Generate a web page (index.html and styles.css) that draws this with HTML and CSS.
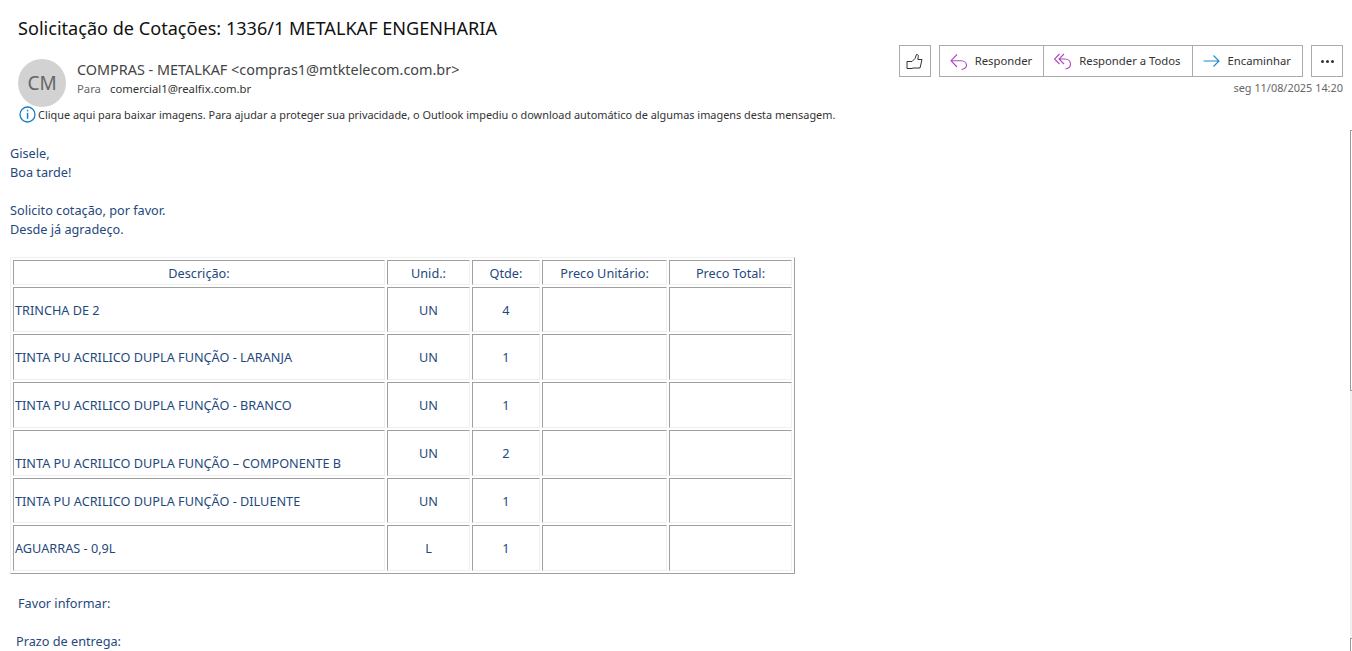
FILE: index.html
```html
<!DOCTYPE html>
<html lang="pt-BR">
<head>
<meta charset="utf-8">
<title>Solicitação de Cotações</title>
<link rel="stylesheet" href="styles.css">
</head>
<body>
<header class="header">
  <h1 class="subject">Solicitação de Cotações: 1336/1 METALKAF ENGENHARIA</h1>
  <div class="meta">
    <div class="avatar">CM</div>
    <div class="people">
      <div class="from">COMPRAS - METALKAF &lt;compras1@mtktelecom.com.br&gt;</div>
      <div class="to"><span class="to-label">Para</span><span>comercial1@realfix.com.br</span></div>
    </div>
    <div class="side">
      <div class="actions">
        <button class="btn btn-icon" aria-label="Curtir">
          <svg width="18" height="18" viewBox="0 0 18 18" fill="none" stroke="#333" stroke-width="1"><path d="M1 8.500h5l3-3 1.500-4c1.300-.2 2 .7 1.800 2l-.5 3h4.200l-2 8.500H7l-1 .5H1z"/></svg>
        </button>
        <div class="group">
          <button class="btn btn-narrow">
            <svg width="18" height="18" viewBox="0 0 18 18" fill="none" stroke="#b146c2" stroke-width="1.100"><path d="M7 2.500 1 8.700l6 6.300M1 8.700h10c3.500 0 5.500 2.300 5.500 4.600s-2 3.700-5 4.200"/></svg>
            Responder
          </button>
          <button class="btn btn-narrow">
            <svg width="18" height="18" viewBox="0 0 18 18" fill="none" stroke="#b146c2" stroke-width="1.100"><path d="M5.500 2 .5 7l5 5M10 2 5 7l5 5M5 7h6c3.500 0 5.500 2.500 5.500 5.300s-2 4.200-5 4.700"/></svg>
            Responder a Todos
          </button>
          <button class="btn btn-wide-gap">
            <svg width="17" height="18" viewBox="0 0 17 18" fill="none" stroke="#1e88d2" stroke-width="1.100"><path d="M.5 9h15.500M10.500 3.500 16 9l-5.500 5.500"/></svg>
            Encaminhar
          </button>
        </div>
        <button class="btn btn-icon btn-more" aria-label="Mais ações"><i></i><i></i><i></i></button>
      </div>
      <div class="date">seg 11/08/2025 14:20</div>
    </div>
  </div>
  <div class="infobar">
    <svg width="17" height="17" viewBox="0 0 17 17"><circle cx="8.500" cy="8.500" r="7.500" fill="#fff" stroke="#1b80c8" stroke-width="1.300"/><rect x="7.800" y="3.800" width="1.500" height="1.600" fill="#1b80c8"/><rect x="7.800" y="6.800" width="1.500" height="6" fill="#1b80c8"/></svg>
    <span>Clique aqui para baixar imagens. Para ajudar a proteger sua privacidade, o Outlook impediu o download automático de algumas imagens desta mensagem.</span>
  </div>
</header>
<div class="edge" aria-hidden="true"></div>
<div class="edge-track" aria-hidden="true"></div>
<div class="edge-low" aria-hidden="true"></div>
<main class="message">
  <p>Gisele,</p>
  <p>Boa tarde!</p>
  <p>&nbsp;</p>
  <p>Solicito cotação, por favor.</p>
  <p>Desde já agradeço.</p>
  <table class="quote">
    <colgroup>
      <col class="c1"><col class="c2"><col class="c3"><col class="c4"><col class="c5">
    </colgroup>
    <thead>
      <tr class="r-head"><th>Descrição:</th><th>Unid.:</th><th>Qtde:</th><th>Preco Unitário:</th><th>Preco Total:</th></tr>
    </thead>
    <tbody>
      <tr class="r-b"><td class="desc">TRINCHA DE 2</td><td>UN</td><td>4</td><td></td><td></td></tr>
      <tr class="r-a"><td class="desc">TINTA PU ACRILICO DUPLA FUNÇÃO - LARANJA</td><td>UN</td><td>1</td><td></td><td></td></tr>
      <tr class="r-a"><td class="desc">TINTA PU ACRILICO DUPLA FUNÇÃO - BRANCO</td><td>UN</td><td>1</td><td></td><td></td></tr>
      <tr class="r-a"><td class="desc low">TINTA PU ACRILICO DUPLA FUNÇÃO – COMPONENTE B</td><td>UN</td><td>2</td><td></td><td></td></tr>
      <tr class="r-b"><td class="desc">TINTA PU ACRILICO DUPLA FUNÇÃO - DILUENTE</td><td>UN</td><td>1</td><td></td><td></td></tr>
      <tr class="r-a"><td class="desc">AGUARRAS - 0,9L</td><td>L</td><td>1</td><td></td><td></td></tr>
    </tbody>
  </table>
  <p class="favor">Favor informar:</p>
  <p class="prazo">Prazo de entrega:</p>
</main>
</body>
</html>
```

FILE: styles.css
```css
* { box-sizing: border-box; }
html, body { height: 100%; }
body {
  margin: 0;
  background: #fff;
  font-family: "Noto Sans", "Open Sans", "Liberation Sans", sans-serif;
  overflow: hidden;
  position: relative;
}
.header { padding: 16px 9px 0 18px; }
.subject {
  margin: 0;
  font-size: 18.100px;
  font-weight: 400;
  line-height: 24px;
  color: #111;
}
.meta { display: flex; margin-top: 5px; height: 58px; }
.avatar {
  width: 48px;
  height: 48px;
  margin-top: 14px;
  border-radius: 50%;
  background: #d2d2d2;
  color: #666;
  font-size: 19px;
  display: flex;
  align-items: center;
  justify-content: center;
  flex: none;
}
.people { margin-left: 11px; padding-top: 15px; flex: 1; }
.from { font-size: 14.400px; line-height: 20px; color: #444; }
.to { font-size: 11.300px; line-height: 16px; margin-top: 1px; color: #333; }
.to-label { color: #666; margin-right: 9px; }
.side { display: flex; flex-direction: column; align-items: flex-end; }
.actions { display: flex; gap: 8px; }
.btn {
  display: flex;
  align-items: center;
  gap: 7px;
  height: 32px;
  padding: 0 12px 2px 10px;
  border: 1px solid #ababab;
  background: #fff;
  color: #333;
  font: 11.300px "Noto Sans", "Open Sans", sans-serif;
}
.btn svg { margin-top: 2px; }
.btn-narrow { padding-right: 11px; }
.btn-wide-gap { gap: 8px; padding-right: 11px; }
.btn-icon { width: 32px; padding: 0; justify-content: center; }
.btn-more { gap: 2px; }
.btn-more i { width: 3px; height: 3px; border-radius: 50%; background: #333; }
.group { display: flex; }
.group .btn + .btn { border-left: 0; }
.date { margin-top: 3px; font-size: 10.900px; line-height: 16px; color: #666; }
.infobar {
  display: flex;
  align-items: center;
  gap: 2px;
  margin: 2px 0 0 1px;
  height: 18px;
  font-size: 10.900px;
  color: #333;
  white-space: nowrap;
}
.edge {
  position: absolute;
  left: 1350px;
  top: 130px;
  width: 2px;
  height: 261px;
  border-left: 1px solid #9a9a9a;
  border-top: 1px solid #9a9a9a;
  border-bottom: 1px solid #9a9a9a;
}
.edge-track {
  position: absolute;
  left: 1350px;
  top: 391px;
  width: 2px;
  height: 247px;
  background: #f0f0f0;
}
.edge-low {
  position: absolute;
  left: 1350px;
  top: 638px;
  width: 2px;
  height: 13px;
  border-left: 1px solid #9a9a9a;
  border-top: 1px solid #9a9a9a;
}
.message {
  padding: 21px 0 0 10px;
  color: #1f497d;
  font-size: 12.700px;
  line-height: 19px;
}
.message p { margin: 0; white-space: nowrap; }
.quote {
  margin-top: 18px;
  border-collapse: separate;
  border-spacing: 2px;
  table-layout: fixed;
  width: 785px;
  border: 1px solid;
  border-color: #f0f0f0 #a0a0a0 #a0a0a0 #f0f0f0;
}
.c1 { width: 372px; }
.c2 { width: 83px; }
.c3 { width: 68px; }
.c4 { width: 125px; }
.c5 { width: 123px; }
.quote th, .quote td {
  border: 1px solid;
  border-color: #a0a0a0 #f0f0f0 #f0f0f0 #a0a0a0;
  padding: 0 1px;
  text-align: center;
  font-weight: 400;
  vertical-align: middle;
}
.r-head { height: 25px; }
.r-a { height: 46px; }
.r-b { height: 45px; }
.r-head th, .r-b td { padding-top: 2px; }
.quote td.desc { text-align: left; }
.quote td.low { vertical-align: bottom; padding-bottom: 2px; }
.message .favor { margin: 20px 0 0 8px; }
.message .prazo { margin: 19px 0 0 6px; }
```
